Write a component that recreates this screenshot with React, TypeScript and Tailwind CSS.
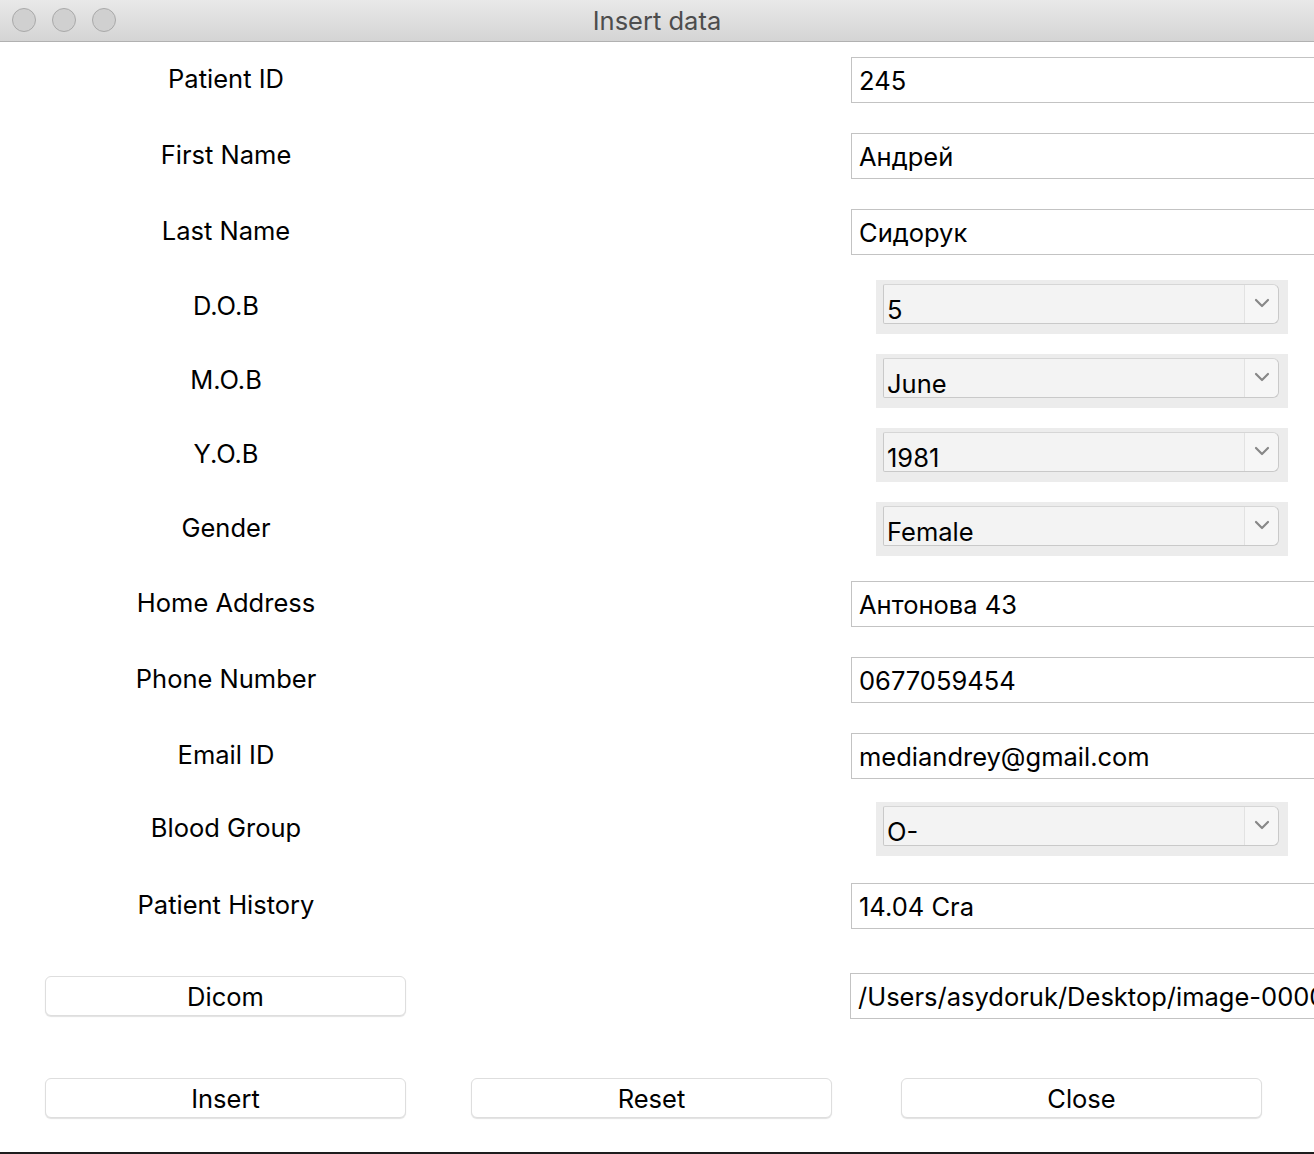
import React from "react";

const font = { fontFamily: "Inter, 'Noto Sans', sans-serif" };

function Label({ text }: { text: string }) {
  return (
    <div className="w-[452px] shrink-0 flex justify-center text-[25.5px] text-black leading-none pb-[2px]">
      {text}
    </div>
  );
}

function Field({ label, value, h }: { label: string; value: string; h: string }) {
  return (
    <div className={`flex items-center ${h}`}>
      <Label text={label} />
      <div className="ml-[399px] w-[520px] shrink-0 h-[46px] border border-[#c3c3c3] bg-white flex items-center pl-[7px] pt-[3px] text-[25.5px] text-black whitespace-nowrap overflow-hidden">
        {value}
      </div>
    </div>
  );
}

function Chevron() {
  return (
    <svg width="16" height="10" viewBox="0 0 16 10" fill="none">
      <path d="M2 2 L8 8 L14 2" stroke="#888888" strokeWidth="2.2" strokeLinecap="round" strokeLinejoin="round" />
    </svg>
  );
}

function Combo({ label, value, h }: { label: string; value: string; h: string }) {
  return (
    <div className={`flex items-center ${h}`}>
      <Label text={label} />
      <div className="ml-[424px] w-[412px] h-[54px] shrink-0 bg-[#ececec] pl-[7px] pt-[4px]">
        <div className="w-[396px] h-[40px] bg-[#f3f3f3] border border-[#c9c9c9] border-t-[#d6d6d6] rounded-r-[6px] rounded-l-[2px] flex">
          <div className="flex-1 flex items-end pl-[3px] text-[25.5px] text-black leading-[30px] -mb-[2px]">
            {value}
          </div>
          <div className="w-[34px] border-l border-[#e2e2e2] bg-[#f6f6f6] rounded-r-[6px] flex items-center justify-center pb-[3px]">
            <Chevron />
          </div>
        </div>
      </div>
    </div>
  );
}

function Button({ text }: { text: string }) {
  return (
    <div className="w-[361px] h-[40px] bg-white border border-[#dedede] rounded-[6px] shadow-[0_1px_1px_rgba(0,0,0,0.12)] flex items-center justify-center pt-[3px] text-[25.5px] text-black">
      {text}
    </div>
  );
}

export default function App() {
  return (
    <div className="w-[1314px] h-[1154px] overflow-hidden bg-white flex flex-col" style={font}>
      <div className="h-[42px] shrink-0 relative bg-gradient-to-b from-[#e9e9e9] to-[#d4d4d4] border-b border-[#b1b1b1] flex items-center justify-center">
        <div className="absolute left-[12px] top-[8px] flex gap-[16px]">
          <div className="w-[24px] h-[24px] rounded-full bg-[#d0d0d0] border border-[#a9a9a9]" />
          <div className="w-[24px] h-[24px] rounded-full bg-[#d0d0d0] border border-[#a9a9a9]" />
          <div className="w-[24px] h-[24px] rounded-full bg-[#d0d0d0] border border-[#a9a9a9]" />
        </div>
        <div className="text-[25.5px] text-[#4d4d4d] pt-[2px]">Insert data</div>
      </div>
      <div className="flex-1 flex flex-col">
        <Field label="Patient ID" value="245" h="h-[76px]" />
        <Field label="First Name" value="Андрей" h="h-[76px]" />
        <Field label="Last Name" value="Сидорук" h="h-[76px]" />
        <Combo label="D.O.B" value="5" h="h-[74px]" />
        <Combo label="M.O.B" value="June" h="h-[74px]" />
        <Combo label="Y.O.B" value="1981" h="h-[74px]" />
        <Combo label="Gender" value="Female" h="h-[74px]" />
        <Field label="Home Address" value="Антонова 43" h="h-[76px]" />
        <Field label="Phone Number" value="0677059454" h="h-[76px]" />
        <Field label="Email ID" value="mediandrey@gmail.com" h="h-[76px]" />
        <Combo label="Blood Group" value="O-" h="h-[70px]" />
        <Field label="Patient History" value="14.04 Cra" h="h-[84px]" />
        <div className="flex items-center h-[96px]">
          <div className="ml-[45px]">
            <Button text="Dicom" />
          </div>
          <div className="ml-[444px] w-[520px] shrink-0 h-[46px] border border-[#c3c3c3] bg-white flex items-center pl-[7px] pt-[3px] text-[25.5px] text-black whitespace-nowrap overflow-hidden">
            /Users/asydoruk/Desktop/image-00000.dcm
          </div>
        </div>
        <div className="flex items-center h-[108px] pl-[45px]">
          <Button text="Insert" />
          <div className="ml-[65px]">
            <Button text="Reset" />
          </div>
          <div className="ml-[69px]">
            <Button text="Close" />
          </div>
        </div>
      </div>
      <div className="h-[2px] shrink-0 bg-[#1e1e1e]" />
    </div>
  );
}
